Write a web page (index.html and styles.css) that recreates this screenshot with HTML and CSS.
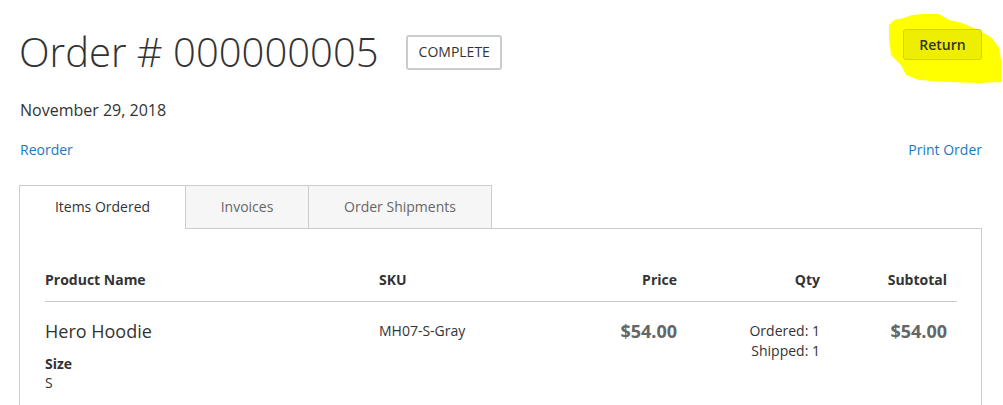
FILE: index.html
```html
<!DOCTYPE html>
<html>
<head>
<meta charset="utf-8">
<link rel="stylesheet" href="styles.css">
</head>
<body>
<div class="page">
  <div class="title-row">
    <h1 class="title">Order # 000000005</h1>
    <span class="status">Complete</span>
    <div class="return-wrap">
      <svg class="highlight" width="114" height="72" viewBox="888 12 114 72" aria-hidden="true">
        <path d="M890 25 L895 20 L905 18 L913 15 L923 14 L940 14 L950 20 L963 23 L980 30 L993 38 L1000 48 L1002 60 L1002 82 L980 83 L947 82 L920 80 L907 75 L902 65 L892 55 L890 38 Z" fill="#ffff00"/>
      </svg>
      <button class="return-btn">Return</button>
    </div>
  </div>
  <div class="date">November 29, 2018</div>
  <div class="actions">
    <a class="link" href="#">Reorder</a>
    <a class="link" href="#">Print Order</a>
  </div>
  <div class="tabs">
    <div class="tab active">Items Ordered</div>
    <div class="tab">Invoices</div>
    <div class="tab">Order Shipments</div>
    <div class="tab-fill"></div>
  </div>
  <div class="tab-content">
    <table class="items">
      <colgroup>
        <col class="c1"><col class="c2"><col class="c3"><col class="c4"><col class="c5">
      </colgroup>
      <thead>
        <tr>
          <th class="name">Product Name</th>
          <th>SKU</th>
          <th class="num">Price</th>
          <th class="num">Qty</th>
          <th class="num">Subtotal</th>
        </tr>
      </thead>
      <tbody>
        <tr>
          <td class="name">
            <div class="product">Hero Hoodie</div>
            <div class="opt-label">Size</div>
            <div class="opt-val">S</div>
          </td>
          <td class="sku">MH07-S-Gray</td>
          <td class="num"><span class="price">$54.00</span></td>
          <td class="num qty">
            <div>Ordered: 1</div>
            <div>Shipped: 1</div>
          </td>
          <td class="num"><span class="price">$54.00</span></td>
        </tr>
      </tbody>
    </table>
  </div>
</div>
</body>
</html>
```

FILE: styles.css
```css
* { box-sizing: border-box; }
html, body { margin: 0; padding: 0; background: #fff; }
body {
  font-family: "Open Sans", "DejaVu Sans", sans-serif;
  font-size: 14px;
  line-height: 20px;
  color: #333;
  overflow: hidden;
}
.page { padding: 0 21px 0 19px; }

.title-row {
  display: flex;
  align-items: center;
  height: 104px;
}
.title {
  margin: 0;
  font-size: 40px;
  font-weight: 300;
  line-height: 44px;
  color: #333;
}
.status {
  margin-left: 27px;
  border: 2px solid #ccc;
  border-radius: 3px;
  padding: 5px 10px 6px 11px;
  font-size: 14px;
  line-height: 20px;
  text-transform: uppercase;
  color: #333;
}
.return-wrap {
  margin-left: auto;
  position: relative;
  align-self: flex-start;
  margin-top: 29px;
}
.highlight {
  position: absolute;
  left: -16px;
  top: -17px;
}
.return-btn {
  position: relative;
  display: block;
  width: 79px;
  height: 31px;
  background: #eeee00;
  border: 1px solid #d3d300;
  border-radius: 3px;
  font-family: "Open Sans", "DejaVu Sans", sans-serif;
  font-size: 14px;
  font-weight: 600;
  color: #333;
  padding: 0;
}

.date {
  font-size: 16px;
  line-height: 20px;
  margin-top: -4px;
  padding-left: 1px;
}
.actions {
  display: flex;
  justify-content: space-between;
  margin-top: 20px;
  padding-left: 1px;
}
.link {
  color: #1979c3;
  text-decoration: none;
  font-size: 14px;
  line-height: 20px;
}

.tabs {
  display: flex;
  margin-top: 25px;
  height: 44px;
}
.tab {
  height: 44px;
  border: 1px solid #ccc;
  border-left: none;
  background: #f6f6f6;
  color: #666;
  font-size: 14px;
  line-height: 42px;
  text-align: center;
}
.tab:first-child { border-left: 1px solid #ccc; }
.tab.active {
  width: 167px;
  background: #fff;
  border-bottom: none;
  color: #333;
}
.tab:nth-child(2) { width: 123px; }
.tab:nth-child(3) { width: 183px; }
.tab-fill {
  flex: 1;
  border-bottom: 1px solid #ccc;
}
.tab-content {
  border: 1px solid #ccc;
  border-top: none;
  border-bottom: none;
  padding: 30px 25px 0;
  height: 176px;
}

.items {
  width: 912px;
  border-collapse: collapse;
  table-layout: fixed;
}
.c1 { width: 324px; }
.c2 { width: 161px; }
.c3 { width: 157px; }
.c4 { width: 143px; }
.c5 { width: 127px; }
.items th {
  font-weight: 700;
  text-align: left;
  padding: 11px 10px 11px;
  border-bottom: 1px solid #ccc;
  font-size: 14px;
  line-height: 20px;
}
.items td {
  vertical-align: top;
  padding: 19px 10px 0;
  font-size: 14px;
  line-height: 20px;
}
.items .name { padding-left: 0; }
.items .num { text-align: right; }
.product { font-size: 18px; line-height: 20px; }
.opt-label { font-weight: 700; margin-top: 13px; }
.opt-val { line-height: 18px; }
.price { font-size: 18px; font-weight: 700; color: #666; line-height: 20px; }
```
